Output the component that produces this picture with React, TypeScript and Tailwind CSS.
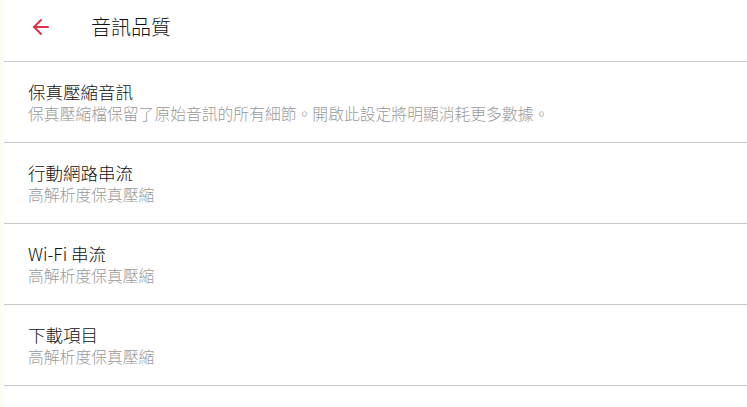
import { ArrowLeft } from "lucide-react";

const rows = [
  { title: "保真壓縮音訊", sub: "保真壓縮檔保留了原始音訊的所有細節。開啟此設定將明顯消耗更多數據。" },
  { title: "行動網路串流", sub: "高解析度保真壓縮" },
  { title: "Wi-Fi 串流", sub: "高解析度保真壓縮" },
  { title: "下載項目", sub: "高解析度保真壓縮" },
];

export default function App() {
  return (
    <div
      className="h-[407px] w-[747px] overflow-hidden bg-white border-l-4 border-[#fffdf3]"
      style={{ fontFamily: '"Noto Sans CJK TC", "Noto Sans", sans-serif' }}
    >
      <header className="flex h-[62px] items-center border-b border-[#c8c8c8] pb-[8px]">
        <ArrowLeft className="ml-[25px] size-[24px] text-[#e3314b]" strokeWidth={2} />
        <h1 className="ml-[38px] text-[20px] font-light text-[#111]">音訊品質</h1>
      </header>
      {rows.map((r) => (
        <div key={r.title} className="flex h-[81px] flex-col justify-center border-b border-[#c8c8c8] pl-[24px]">
          <p className="text-[17.5px] leading-[22px] font-light text-[#111]">{r.title}</p>
          <p className="text-[15.8px] leading-[21px] font-light text-[#9a9a9a]">{r.sub}</p>
        </div>
      ))}
    </div>
  );
}
